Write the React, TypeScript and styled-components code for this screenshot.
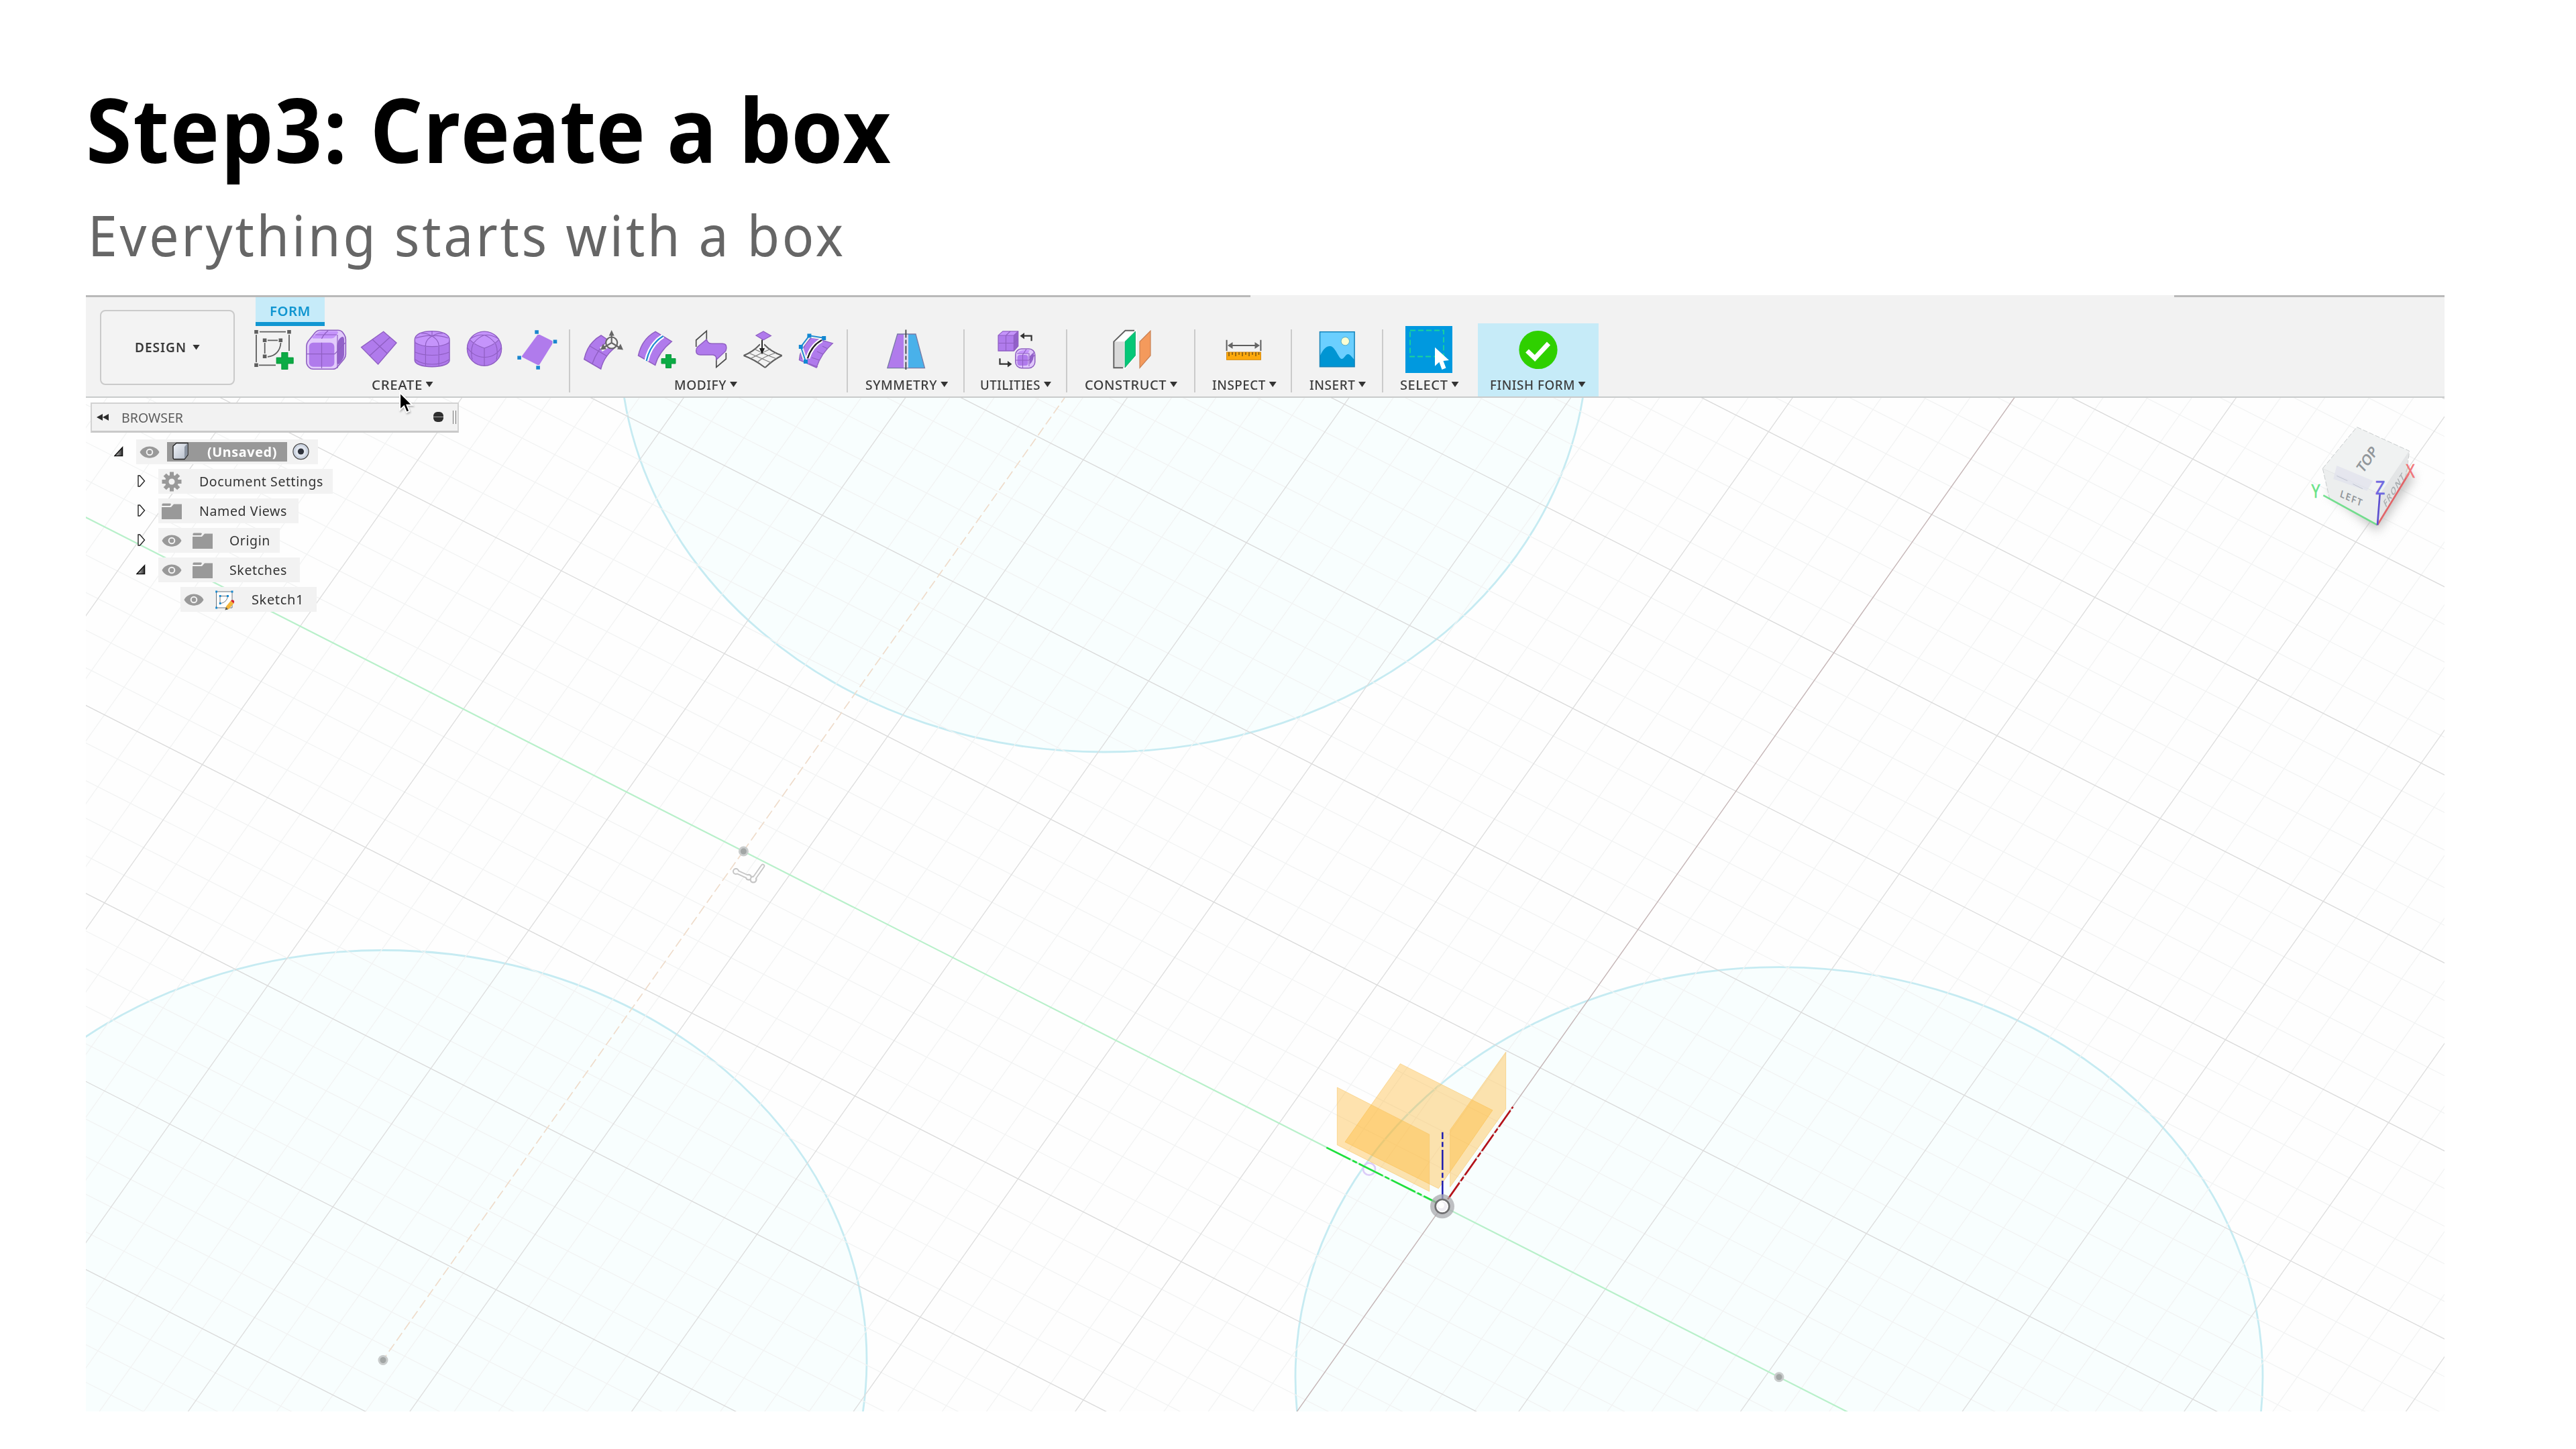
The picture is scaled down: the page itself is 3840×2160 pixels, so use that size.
import React, { useLayoutEffect, useRef, useState } from "react";
import styled, { createGlobalStyle } from "styled-components";

const Global = createGlobalStyle`
  * { box-sizing: border-box; }
  body { margin: 0; background: #fff; }
`;

const UI = `"Noto Sans", "Open Sans", sans-serif`;

const Slide = styled.main`
  width: 3840px;
  height: 2160px;
  padding: 117px 196px 56px 128px;
  background: #fff;
  overflow: hidden;
  display: flex;
  flex-direction: column;
  font-family: ${UI};
`;

const FitBox = styled.span<{ $w: number }>`
  display: block;
  flex: none;
  width: ${(p) => p.$w}px;
  white-space: nowrap;
`;
const FitInner = styled.span`
  display: inline-block;
  transform-origin: 0 50%;
`;

/* Sets a run of text to a given width by stretching it horizontally. */
function Fit({ w, children }: { w: number; children: React.ReactNode }) {
  const ref = useRef<HTMLSpanElement>(null);
  const [scale, setScale] = useState(1);
  useLayoutEffect(() => {
    if (ref.current && ref.current.offsetWidth) setScale(w / ref.current.getBoundingClientRect().width);
  }, [w]);
  return (
    <FitBox $w={w}>
      <FitInner ref={ref} style={{ transform: `scaleX(${scale})` }}>
        {children}
      </FitInner>
    </FitBox>
  );
}

const Title = styled.h1`
  margin: 0;
  height: 150px;
  font: 700 133px/150px "Open Sans", "Noto Sans", sans-serif;
  color: #000;
`;
const Wide = styled.span`
  letter-spacing: 2px;
`;
const Subtitle = styled.p`
  margin: 0;
  padding: 23px 0 0 3px;
  height: 173px;
  font: 400 84px/120px "Noto Sans", "Open Sans", sans-serif;
  letter-spacing: 4px;
  color: #666;
`;

const Frame = styled.section`
  width: 3516px;
  height: 1664px;
  display: flex;
  flex-direction: column;
  background: #fefefe;
`;

const TopEdge = styled.div`
  display: flex;
  justify-content: space-between;
  height: 3px;
  background: #f2f2f2;
`;
const EdgePiece = styled.i<{ $w: number }>`
  width: ${(p) => p.$w}px;
  height: 3px;
  background: #b9b9b9;
`;

const Toolbar = styled.header`
  display: flex;
  height: 150px;
  background: #f2f2f2;
  border-bottom: 2px solid #c9cbcb;
`;

const DesignButton = styled.button`
  margin: 19px 0 0 21px;
  width: 201px;
  height: 112px;
  border: 2px solid #cacaca;
  border-radius: 8px;
  background: #f3f3f3;
  display: flex;
  justify-content: center;
  align-items: center;
  gap: 9px;
  padding: 0 0 1px 0;
  font: 600 20px/26px ${UI};
  letter-spacing: 1px;
  color: #393939;
`;

const Ribbon = styled.div`
  display: flex;
  flex-direction: column;
  flex: 1;
`;
const Tab = styled.div`
  margin-left: 31px;
  width: 103px;
  height: 43px;
  background: #c6ebf9;
  border-bottom: 6px solid #1197d2;
  display: flex;
  justify-content: center;
  padding-top: 6px;
  font: 600 20.4px/28px ${UI};
  letter-spacing: 0.5px;
  color: #1095d0;
`;
const Groups = styled.div`
  display: flex;
  height: 105px;
`;
const Group = styled.div<{ $w: number; $active?: boolean }>`
  width: ${(p) => p.$w}px;
  height: ${(p) => (p.$active ? 109 : 105)}px;
  margin-top: ${(p) => (p.$active ? -4 : 0)}px;
  padding-top: ${(p) => (p.$active ? 4 : 0)}px;
  background: ${(p) => (p.$active ? "#c6ebf8" : "transparent")};
  display: flex;
  flex-direction: column;
  align-items: center;
`;
const Divider = styled.i`
  width: 2px;
  height: 94px;
  margin: 5px -1px 0;
  background: #cbcbcb;
`;
const Icons = styled.div<{ $gap?: number; $nudge?: number }>`
  display: flex;
  align-items: center;
  gap: ${(p) => p.$gap ?? 0}px;
  height: 70px;
  margin-left: ${(p) => (p.$nudge ?? 0) * 2}px;
`;
const Label = styled.div<{ $nudge?: number }>`
  display: flex;
  align-items: center;
  gap: 5px;
  margin-top: 3px;
  margin-left: ${(p) => (p.$nudge ?? 0) * 2}px;
  font: 500 20.4px/28px ${UI};
  letter-spacing: 0.6px;
  color: #3c3c3c;
`;
const Caret = styled.i`
  width: 11px;
  height: 8px;
  background: #333;
  clip-path: polygon(0 0, 100% 0, 50% 100%);
`;
const Svg60 = styled.svg`
  width: 60px;
  height: 60px;
  display: block;
  overflow: visible;
`;
const Svg70 = styled.svg`
  width: 70px;
  height: 70px;
  display: block;
`;

const P = "#b07bec";
const PL = "#c594fb";
const PD = "#8f5fc2";
const G = "#5e5e5e";

const SketchIcon = () => (
  <Svg60 viewBox="0 0 60 60">
    <path d="M9 3.7H48M4 8V49M53 8V32M8 53.3H33" stroke={G} strokeWidth="1.8" fill="none" />
    <path d="M21 16.3H36M16.7 20V36M40.5 20C40 32 32 40 21 40.8" stroke={G} strokeWidth="1.8" fill="none" />
    <path d="M1.2 1H6.8V6.5H1.2ZM50.2 1H55.8V6.5H50.2ZM1.2 50.5H6.8V56H1.2ZM13.8 13.6H19.4V19H13.8ZM37.5 13.6H43.1V19H37.5ZM13.8 37.6H19.4V43H13.8Z" fill={G} />
    <path d="M41.5 34H51.3V41.8H59.5V51.2H51.3V60H41.5V51.2H33.8V41.8H41.5Z" fill="#0cab45" />
    <path d="M42 34.5H50.8V42.3H59V50.7H50.8V59.5H42V50.7H34.3V42.3H42Z" fill="none" stroke="#0a9a3d" />
  </Svg60>
);
const BoxIcon = () => (
  <Svg60 viewBox="0 0 60 60">
    <path d="M14 4.500Q17 1.300 22 1.300H48Q52 1.300 54.500 4L57 7.500Q59.400 11 59.400 15V37Q59.400 41 57 44L47 56Q44.500 59.300 40 59.300H11Q7 59.300 4 56L2.500 54Q.9 52 .9 48V25Q.9 21 3.500 17.500Z" fill="#e2cbfb" stroke={PD} strokeWidth="1.600" />
    <path d="M17 5Q20 2.500 24 2.500H46Q49 3 47.500 6L43 11.500Q41 13.500 38 13.500H11Q8.500 13.500 10 11Z" fill={PL} />
    <rect x="4.700" y="19.700" width="37.700" height="36" rx="6" fill={P} />
    <path d="M46.500 24Q47 17 51 13Q56.500 8 57 15V38Q57 42 54 46L50 51Q46.500 54 46.500 48Z" fill="#9261c9" />
    <path d="M23.500 19.700V58M23.500 14Q26 8 33 2M1 36.700H43L58.500 20M14 8H46M47 8V58" fill="none" stroke={PD} strokeWidth="1.200" />
  </Svg60>
);
const PlaneIcon = () => (
  <Svg60 viewBox="0 0 60 60">
    <path d="M36.600 3.300L56 20L28.600 52L3.600 26.700Z" fill={P} stroke={PD} strokeWidth="1.400" />
    <path d="M20 15L42.300 36M46.300 11.700L16 39.300" stroke={PD} strokeWidth="1.400" />
  </Svg60>
);
const CylinderIcon = () => (
  <Svg60 viewBox="0 0 60 60">
    <path d="M4.300 16C4.300 7 15 2.700 30 2.700S56 7 56 16V46C56 52 45 55.700 30 55.700S4.300 52 4.300 46Z" fill={P} stroke={PD} strokeWidth="1.600" />
    <path d="M5 16C5 8 15 3.500 30 3.500S55.300 8 55.300 16C55.300 22 44 25.500 30 25.500S5 22 5 16Z" fill={PL} />
    <path d="M5 20Q15 25.700 30 25.700T55.500 20M5 34Q15 38.500 30 38.500T55.500 34M5 45Q15 52 30 52T55.500 45M20.400 54V24Q20 16 30 10Q40 16 40.200 24V54M14 6Q22 5 30 10Q38 5 46 6M6 13Q22 8 30 10Q40 8 54 13M30 3V10" fill="none" stroke={PD} strokeWidth="1.200" />
  </Svg60>
);
const SphereIcon = () => (
  <Svg60 viewBox="0 0 60 60">
    <circle cx="29" cy="28.700" r="25.600" fill={P} />
    <path d="M29 3.500C15 3.500 9 12 7 16C13 22 21 26 29 28C37 26 45 22 51 16C49 11 43 3.500 29 3.500Z" fill={PL} />
    <circle cx="29" cy="28.700" r="25.600" fill="none" stroke={PD} strokeWidth="1.400" />
    <path d="M29 28V54M29 28Q14 23 7.500 15.500M29 28Q44 23 50.500 15.500M29 8.500Q19 12 12 22Q8 32 11 45M29 8.500Q39 12 46 22Q50 32 47 45M3.500 27Q13 41 29 41.500T54.500 27M8 14Q19 7 29 8.500Q39 7 50 14" fill="none" stroke={PD} strokeWidth="1.200" />
  </Svg60>
);
const FaceIcon = () => (
  <Svg60 viewBox="0 0 60 60">
    <path d="M31.300 6.700L54.500 18.300L32.300 54L6.300 40.700Z" fill={P} />
    <path d="M25 .5H33V8H25ZM52.500 14.500H60.500V22H52.500ZM-1 38.500H7V46H-1ZM27 53H35V61H27Z" fill="#f2f2f2" />
    <path d="M26.300 1.200H31.900V6.800H26.300ZM53.700 15.500H59.300V21.100H53.700ZM.3 39.500H5.900V45.100H.3ZM28.300 54.200H33.900V59.800H28.300Z" fill="#1a86ce" />
  </Svg60>
);
const EditFormIcon = () => (
  <Svg60 viewBox="0 0 60 60">
    <path d="M26 9Q6 20 .8 44.500L25.700 59Q31 38 50 25Z" fill={P} stroke={PD} strokeWidth="1.500" />
    <path d="M9.500 25L35 40M13 51Q20 30 37 16" fill="none" stroke={PD} strokeWidth="1.400" />
    <path d="M41.700 3V20L26 30M41.700 20L58 30" stroke="#f2f2f2" strokeWidth="7" fill="none" />
    <circle cx="41.700" cy="20" r="8.500" fill="#f2f2f2" stroke="#666" strokeWidth="2.200" />
    <path d="M41.700 8V20L30 27M41.700 20L53 27" stroke="#666" strokeWidth="2.200" fill="none" />
    <path d="M41.700 1L45.700 9.500H37.700ZM25 30.500L29 21.500L34 29.500ZM59 30.500L55 21.500L50 29.500Z" fill="#666" />
  </Svg60>
);
const InsertEdgeIcon = () => (
  <Svg60 viewBox="0 0 60 60">
    <path d="M28 3.300Q8 14 2.500 39L27.700 53.300Q33 34 52.400 18Z" fill={P} stroke={PD} strokeWidth="1.500" />
    <path d="M39.500 10Q20 22 14.600 47" stroke="#fff" strokeWidth="6.500" fill="none" />
    <path d="M39.500 10Q20 22 14.600 47" stroke="#1f8bd0" strokeWidth="2.200" fill="none" />
    <path d="M43.500 37.500H51.500V43.500H58V51H51.500V57.500H43.500V51H37V43.500H43.500Z" fill="#0cab45" stroke="#0a9a3d" />
  </Svg60>
);
const CreaseIcon = () => (
  <Svg60 viewBox="-2 0 60 60">
    <path d="M23.300 15V2.300L7.700 16V26M37.800 43V56.300L52.300 44V35" stroke="#4d4d4d" strokeWidth="1.700" fill="none" />
    <path d="M23.300 15Q25 21.300 31 21.300H47Q52.800 21.300 52.800 27Q52.800 32 50 34L38 45Q38 38 32 38H14Q7.700 38 7.700 32Q7.700 28 10 26Z" fill={P} stroke={PD} strokeWidth="1.500" />
  </Svg60>
);
const PullIcon = () => (
  <Svg60 viewBox="0 0 60 60">
    <path d="M31 3L42.300 9.500L31 15.700L20 9Z" fill={P} stroke={PD} strokeWidth="1.300" />
    <path d="M1.500 39Q15 34 26 22.300M58.700 39Q43 34 32 22.300M1.500 39Q18 45 33.500 57M58.700 39Q46 45 33.500 57" stroke={G} strokeWidth="2" fill="none" />
    <path d="M10 35.500Q30 44 43 50M18 29.500Q34 38 51 44M51 34.500Q30 41 22 49M42 29Q26 36 12 43.500" stroke="#7b7b7b" strokeWidth="1.300" fill="none" />
    <path d="M29 17V34" stroke="#f2f2f2" strokeWidth="6" />
    <path d="M29 15.500V34" stroke="#222" strokeWidth="1.900" />
    <path d="M25 28H33L29 37.500Z" fill="#222" />
  </Svg60>
);
const MatchIcon = () => (
  <Svg60 viewBox="0 0 60 60">
    <path d="M24 12L55.300 20.700Q38 36 31 57L5.400 45.700Q6 28 24 12Z" fill={P} stroke={PD} strokeWidth="1.300" />
    <path d="M24 42L36 46M20 51L33 56M40 25L48 29M32 33L41 37M24 12Q8 26 9 44" stroke={PD} strokeWidth="1.200" fill="none" />
    <path d="M15 47.700L7.800 26L20.400 9.300L42.200 12.700" stroke="#f2f2f2" strokeWidth="6" fill="none" />
    <path d="M39 16Q24 24 18 43" stroke="#fff" strokeWidth="6.500" fill="none" />
    <path d="M39 16Q24 24 18 43" stroke="#222" strokeWidth="2.400" fill="none" />
    <path d="M15 47.700L7.800 26L20.400 9.300L42.200 12.700" stroke="#1f8bd0" strokeWidth="2" fill="none" />
    <path d="M12 45H18V51H12ZM4.800 23H10.800V29H4.800ZM17.400 6.500H23.400V12.500H17.400ZM39.200 10H45.200V16H39.200Z" fill="#1287d2" />
  </Svg60>
);
const SymmetryIcon = () => (
  <Svg60 viewBox="0 0 60 60">
    <path d="M16.800 7H26V57.700H1.800Z" fill={P} />
    <path d="M26 7H33V57.700H26Z" fill="#e0dcf0" />
    <path d="M33 7H44L57.500 57.700H33Z" fill="#49b1ea" />
    <path d="M16.800 7H44L57.500 57.700H1.800Z" fill="none" stroke="#777aa5" strokeWidth="1.300" />
    <path d="M29.400 .5V60" stroke="#444" strokeWidth="1.800" strokeDasharray="12 3 6 3" />
  </Svg60>
);
const ConvertIcon = () => (
  <Svg60 viewBox="-1 0 60 60">
    <path d="M2.100 9L9 3H31.700V25L25.400 32H2.100Z" fill={P} stroke={PD} strokeWidth="1.300" />
    <path d="M2.500 9L9 3.500H31L25.400 9Z" fill={PL} />
    <path d="M25.400 9L31.300 4V25L25.400 31.500Z" fill="#9261c9" />
    <path d="M2.100 9H25.400V32M25.400 9L31.700 3M13.500 32V9L20 3M2 20.500H25.400L31.500 14" fill="none" stroke={PD} strokeWidth="1.200" />
    <rect x="27.800" y="29" width="29" height="28.700" rx="9" fill="#dfc6fb" stroke={PD} strokeWidth="1.500" />
    <rect x="30.500" y="38" width="16" height="16" rx="4" fill={P} />
    <path d="M33 33Q38 30 49 31L46 36H31Z" fill={PL} />
    <path d="M49 40L55 34Q56 46 49 52Z" fill="#9261c9" />
    <path d="M38.500 57V38L44 29.500M28 46H48L57 38M30 36H48V55" fill="none" stroke={PD} strokeWidth="1.100" />
    <path d="M51.600 17.300V9.700H38M4.500 43.300V51.700H18" stroke="#333" strokeWidth="2.200" fill="none" />
    <path d="M34.500 9.700L41 5V14.400ZM22.500 51.700L16 47V56.400Z" fill="#333" />
  </Svg60>
);
const ConstructIcon = () => (
  <Svg60 viewBox="-1 0 60 60">
    <path d="M2.300 18.300L19.400 1.700H34L19 18.300Z" fill="#fff" />
    <path d="M2.300 18.300H18V57.300H2.300Z" fill="#d9d9d9" />
    <path d="M33 1.700H19.400L2.300 18.300V57.300H16" fill="none" stroke={G} strokeWidth="1.900" />
    <path d="M35 2.300V39L19 57.300V18.300Z" fill="#04c777" stroke="#fff" strokeWidth="2.500" />
    <path d="M34.500 3V39L19 57V18.300Z" fill="#04c777" stroke="#149e66" strokeWidth=".8" />
    <path d="M57 2.300V39L41 57.300V18.300Z" fill="#f49a5c" stroke="#c98053" strokeWidth="1.200" />
  </Svg60>
);
const InspectIcon = () => (
  <Svg60 viewBox="0 0 60 60">
    <path d="M4.600 15.700V32M55.400 15.700V32M8 24H52" stroke={G} strokeWidth="2" />
    <path d="M6 24L13.500 19V29ZM54 24L46.500 19V29Z" fill="#666" />
    <rect x="4.500" y="34" width="51" height="11.300" fill="#fda90c" stroke="#d38a17" />
    <path d="M8 34V40M13 34V38M18 34V40M23 34V38M28 34V40M33 34V38M38 34V40M43 34V38M48 34V40M52.500 34V38" stroke="#7a5413" strokeWidth="1.500" />
  </Svg60>
);
const PictureIcon = () => (
  <Svg60 viewBox="0 0 60 60">
    <rect x="4.500" y="3.700" width="51.600" height="52" fill="#6bcfff" />
    <path d="M5 39C10 28 15 24.500 20 25C28 26 32 43 37 44C41 44 43 36 47 37C51 38 53 43 56 45V56H5Z" fill="#0095d3" />
    <circle cx="42.300" cy="17.700" r="6.200" fill="#fbffd2" stroke="#58acc4" />
    <rect x="4.500" y="3.700" width="51.600" height="52" fill="none" stroke="#1583b9" strokeWidth="1.500" />
  </Svg60>
);
const SelectIcon = () => (
  <Svg70 viewBox="0 0 70 70">
    <rect width="70" height="70" fill="#0099df" />
    <rect x="7" y="6.500" width="50" height="39" fill="none" stroke="#19d49b" strokeWidth="1.800" strokeDasharray="8 4" />
    <path d="M44 31.700V59.700L50.400 53.700L54.500 65L60.500 62.500L56.500 52L65 51Z" fill="#fff" />
  </Svg70>
);
const CheckIcon = () => (
  <Svg60 viewBox="0 0 60 60">
    <circle cx="30" cy="30.500" r="28.600" fill="#2fd000" />
    <path d="M13.500 32L25 43L45.500 21" fill="none" stroke="#fff" strokeWidth="7" />
  </Svg60>
);

const ViewportWrap = styled.div`
  position: relative;
`;
const Viewport = styled.div`
  position: relative;
  width: 3516px;
  height: 1511px;
  overflow: hidden;
`;
const Canvas = styled.svg`
  position: absolute;
  inset: 0;
  width: 3516px;
  height: 1511px;
`;
const Palette = styled.aside`
  position: relative;
  width: 549px;
  margin: 7px 0 0 7px;
`;
const PaletteHead = styled.div`
  display: flex;
  align-items: center;
  height: 45px;
  padding: 0 2px 1px 7px;
  background: #f2f2f2;
  border: 2px solid #d2d2d2;
  border-bottom: 3px solid #c9c9c9;
  font: 400 20.500px/30px ${UI};
  color: #5d5d5d;
`;
const Spacer = styled.i`
  flex: 1;
`;
const Minus = styled.i`
  width: 15px;
  height: 15px;
  border-radius: 6px;
  background: linear-gradient(#2f2f2f 6.500px, #aaa 6.500px, #aaa 8.500px, #2f2f2f 8.500px);
  margin-right: 14px;
`;
const Grip = styled.i`
  width: 5px;
  height: 20px;
  border-left: 1px solid #777;
  border-right: 1px solid #777;
`;
const Tree = styled.ul`
  list-style: none;
  margin: 10px 0 0;
  padding: 0;
  display: flex;
  flex-direction: column;
  gap: 7.500px;
`;
const Row = styled.li<{ $indent: number }>`
  display: flex;
  align-items: center;
  height: 36.500px;
  padding-left: ${(p) => p.$indent}px;
`;
const Twist = styled.svg<{ $gap: number }>`
  width: 14px;
  height: 18px;
  flex: none;
  margin-right: ${(p) => p.$gap}px;
`;
const Chip = styled.div<{ $w: number }>`
  display: flex;
  align-items: center;
  width: ${(p) => p.$w}px;
  height: 36.500px;
  padding: 1px 0 0 5px;
  background: #f2f2f2;
  font: 400 20px/28px ${UI};
  letter-spacing: 0.6px;
  color: #333;
`;
const Selected = styled.div`
  display: flex;
  align-items: center;
  width: 179px;
  height: 29px;
  margin: 0 8px 0 11px;
  padding-left: 8px;
  gap: 28px;
  background: #989898;
  color: #fff;
  font-weight: 700;
`;
const Glyph = styled.svg<{ $w?: number; $mr?: number }>`
  width: ${(p) => p.$w ?? 30}px;
  height: 30px;
  flex: none;
  margin-right: ${(p) => p.$mr ?? 0}px;
  overflow: visible;
`;

const Eye = ({ mr = 0 }: { mr?: number }) => (
  <Glyph $mr={mr} viewBox="0 0 30 30">
    <path d="M0.500 15C6 3.500 24 3.500 29.500 15C24 26.500 6 26.500 .5 15Z" fill="#999" />
    <circle cx="15" cy="15" r="4.300" fill="none" stroke="#f2f2f2" strokeWidth="2" />
  </Glyph>
);
const Folder = ({ mr = 0 }: { mr?: number }) => (
  <Glyph $mr={mr} viewBox="0 0 30 30">
    <path d="M.5 5Q.5 3.500 2 3.500H12.500Q14.500 3.500 13.500 5.500L12.500 7H.5ZM0 9H14L18 4.500H30V27H0Z" fill="#999" />
  </Glyph>
);
const Gear = () => (
  <Glyph $mr={26} viewBox="0 0 30 30">
    <g fill="#999">
      {[0, 45, 90, 135].map((a) => (
        <rect key={a} x="12" y="0.500" width="6" height="29" transform={`rotate(${a} 15 15)`} />
      ))}
      <circle cx="15" cy="15" r="10" />
    </g>
    <circle cx="15" cy="15" r="4.500" fill="#f2f2f2" />
  </Glyph>
);
const Solid = () => (
  <Glyph $w={24} viewBox="0 0 24 30">
    <defs>
      <linearGradient id="solid" x1="0" y1="0" x2="1" y2="1">
        <stop offset="0" stopColor="#f2f5fa" />
        <stop offset="1" stopColor="#b4bcc9" />
      </linearGradient>
    </defs>
    <path d="M1 6L6 1.500H23V19L18 25.500H3Q1 25.500 1 23Z" fill="url(#solid)" stroke="#222" strokeWidth="1.400" />
    <path d="M18 25L22.500 19V2L18 7Z" fill="#8b94a1" />
  </Glyph>
);
const Radio = () => (
  <Glyph $w={25} viewBox="0 0 25 30">
    <circle cx="12.500" cy="14" r="11.600" fill="#cdd5e2" stroke="#444" strokeWidth="1.200" />
    <circle cx="12.500" cy="14" r="8" fill="#eef1f6" opacity=".6" />
    <circle cx="12.500" cy="14" r="4.600" fill="#2e323b" />
  </Glyph>
);
const SketchGlyph = () => (
  <Glyph $mr={25} viewBox="0 0 30 30">
    <path d="M2.500 3H26V27H2.500Z" fill="#fff" stroke="#6a747c" strokeWidth="1" />
    <path d="M8 9.500H19.500C19 15 15 20 8 20.500Z" fill="none" stroke="#6a747c" strokeWidth="1" />
    <path d="M1.200 1.500H4V4.500H1.200ZM24.500 1.500H27.500V4.500H24.500ZM1.200 25.500H4V28.500H1.200ZM6.800 8H9.500V11H6.800ZM18 8H21V11H18ZM6.800 19H9.500V22H6.800Z" fill="#1789cf" />
    <path d="M24 16.500L28.500 20.500L21 29L15.500 30L17 25Z" fill="#f3b53b" />
    <path d="M24 16.500Q26 14.500 28.500 16Q30 18 28.500 20.500Z" fill="#d3222e" />
    <path d="M17 26L15.500 30.500L20 29.300Z" fill="#545454" />
  </Glyph>
);

const Closed = ({ gap }: { gap: number }) => (
  <Twist $gap={gap} viewBox="0 0 14 18">
    <path d="M2 1H4.500L11.500 9L4.500 17H2Z" fill="#fff" stroke="#222" strokeWidth="1.400" />
  </Twist>
);
const Open = ({ gap }: { gap: number }) => (
  <Twist $gap={gap} viewBox="0 0 14 18">
    <defs>
      <linearGradient id="tw">
        <stop offset="0" stopColor="#d0d0d0" />
        <stop offset="1" stopColor="#333" />
      </linearGradient>
    </defs>
    <path d="M1 15.500L12.500 3V15.500Z" fill="url(#tw)" stroke="#111" strokeWidth="1.600" />
  </Twist>
);

const OX = 2150;
const OY = 1798;
const SA = 0.5078;
const SB = 1.4132;
const range = (a: number, b: number) => Array.from({ length: b - a + 1 }, (_, i) => a + i);

/* Ground grid of the modelling space: one heavy line for every five cells. */
function Grid() {
  const down = (k: number) => {
    const y = OY + k * 56.06;
    return <path key={`a${k}`} d={`M100 ${y + (100 - OX) * SA}L3700 ${y + (3700 - OX) * SA}`} />;
  };
  const up = (k: number) => {
    const x = OX + k * 66.12;
    return <path key={`b${k}`} d={`M${x - (2150 - OY) / SB} 2150L${x + (OY - 550) / SB} 550`} />;
  };
  const a = range(-40, 26).filter((k) => k !== 0);
  const b = range(-44, 44).filter((k) => k !== 0);
  return (
    <g fill="none">
      <g stroke="#f2f3f3" strokeWidth="1.300">
        {a.filter((k) => k % 5).map(down)}
        {b.filter((k) => k % 5).map(up)}
      </g>
      <g stroke="#d9d9d9" strokeWidth="1.300">{a.filter((k) => k % 5 === 0).map(down)}</g>
      <g stroke="#dddddd" strokeWidth="1.300">{b.filter((k) => k % 5 === 0).map(up)}</g>
      <g stroke="#c4b4b5" strokeWidth="1.400">{up(0)}</g>
      <g stroke="#b8f0ca" strokeWidth="2.200">{down(0)}</g>
    </g>
  );
}

const Disc = ({ x, y }: { x: number; y: number }) => (
  <ellipse cx={x} cy={y} rx="721" ry="611" fill="#f8fefe" stroke="#c6ebf2" strokeWidth="2.800" />
);
const Dot = ({ x, y }: { x: number; y: number }) => (
  <g>
    <circle cx={x} cy={y} r="7.500" fill="#c9cccc" />
    <circle cx={x} cy={y} r="4.500" fill="#a2a6a5" />
  </g>
);

const CubeText = styled.text`
  font-family: "Noto Sans", sans-serif;
  font-weight: 600;
  fill: #92979b;
  text-anchor: middle;
`;
const AxisText = styled.text`
  font-family: "Noto Sans", sans-serif;
  font-size: 27px;
  text-anchor: middle;
`;

const ViewCube = () => (
  <g transform="translate(3400 600) scale(.33333)">
    <defs>
      <filter id="soft" x="-40%" y="-40%" width="180%" height="180%">
        <feGaussianBlur stdDeviation="24" />
      </filter>
    </defs>
    <path d="M210 400L432 575L600 330L450 260Z" fill="#999" opacity=".6" filter="url(#soft)" />
    <path d="M187 295L445 410L432 548L218 430Z" fill="#eceeee" />
    <path d="M445 410L575 217L553 340L432 548Z" fill="#e3e5e6" />
    <path d="M187 295L340 110L575 217L445 410Z" fill="#f0f2f2" />
    <path d="M187 295L340 110L575 217L560 330M187 295L218 430" fill="none" stroke="#c8cccd" strokeWidth="3" strokeDasharray="22 8" />
    <path d="M187 295L445 410L575 217" fill="none" stroke="#e2e4e6" strokeWidth="3" />
    <path d="M250 282L412 350L385 395L235 342Z" fill="#dfe1ec" opacity=".7" />
    <path d="M250 328L298 350M322 364L366 386" stroke="#c0c3cf" strokeWidth="3" />
    <CubeText transform="translate(402 270) rotate(-55) skewX(-10)" fontSize="62">TOP</CubeText>
    <CubeText transform="translate(312 444) rotate(25) skewX(10)" fontSize="43" letterSpacing="4">LEFT</CubeText>
    <CubeText transform="translate(513 402) rotate(-58) skewX(-32) scale(1 .8)" fontSize="42" letterSpacing="5" opacity=".7">FRONT</CubeText>
    <path d="M190 415L432 548" stroke="#5fdc7e" strokeWidth="8" opacity=".85" />
    <path d="M432 548L572 318" stroke="#e26468" strokeWidth="8" />
    <path d="M432 548L443 408" stroke="#5d4fd0" strokeWidth="8" />
    <g transform="scale(3)" strokeWidth=".5">
      <AxisText fill="#69e387" stroke="#69e387" transform="translate(52 142) scale(.85 1)">Y</AxisText>
      <AxisText fill="#f07478" stroke="#f07478" transform="translate(193 112) scale(.85 1)">X</AxisText>
      <AxisText fill="#6f68e0" stroke="#6f68e0" transform="translate(148 137.500) scale(.95 1)">Z</AxisText>
    </g>
  </g>
);

/* Perpendicular mark: two rounded bars drawn as outlines. */
const RightAngle = () => (
  <g fill="none" strokeLinecap="round">
    <path d="M1097 1299L1116 1307.700M1123 1311L1137 1291" stroke="#c6c6c6" strokeWidth="6.500" />
    <g fill="#c6c6c6">
      <circle cx="1097" cy="1299" r="5" />
      <circle cx="1116" cy="1307.700" r="5" />
      <circle cx="1123" cy="1311" r="5.600" />
    </g>
    <path d="M1097 1299L1116 1307.700M1123 1311L1137 1291" stroke="#fdfdfd" strokeWidth="3" />
    <g fill="#fdfdfd">
      <circle cx="1097" cy="1299" r="3" />
      <circle cx="1116" cy="1307.700" r="2.600" />
      <circle cx="1123" cy="1311" r="3.200" />
    </g>
  </g>
);

const OriginPlanes = () => (
  <g transform="translate(1900 1520) scale(.33333)">
    <circle cx="423" cy="668" r="27" fill="none" stroke="#dccdf8" strokeWidth="8" />
    <g fill="#ffb62c" fillOpacity=".38" stroke="#f8c260" strokeOpacity=".55" strokeWidth="3">
      <path d="M562 197L975 405L733 755L315 547Z" />
      <path d="M280 303L692 513V768L280 560Z" />
      <path d="M1034 145V400L785 748V493Z" />
    </g>
    <path d="M232 572L735 823" stroke="#1fe03c" strokeWidth="8" strokeDasharray="120 10 22 10" />
    <path d="M775 803L1066 390" stroke="#b51219" strokeWidth="8" strokeDasharray="90 10 22 10" />
    <path d="M751 810V503" stroke="#1d1bb0" strokeWidth="7.500" strokeDasharray="90 13 22 13" />
    <circle cx="750" cy="835" r="54" fill="#a9a9ad" fillOpacity=".75" />
    <circle cx="750" cy="835" r="31" fill="#fff" stroke="#707072" strokeWidth="8" />
    <circle cx="750" cy="835" r="22" fill="#f0eef4" />
    <circle cx="745" cy="830" r="14" fill="#fff" />
  </g>
);

const Pointer = styled.svg`
  position: absolute;
  left: 466px;
  top: -10px;
  width: 24px;
  height: 35px;
  overflow: visible;
  filter: drop-shadow(1px 2px 1px rgba(0, 0, 0, 0.25));
`;

export default function App() {
  return (
    <Slide>
      <Global />
      <Title>
        <Fit w={1200}>
          <Wide>Step3:</Wide> Create a box
        </Fit>
      </Title>
      <Subtitle>
        <Fit w={1130}>Everything starts with a box</Fit>
      </Subtitle>
      <Frame>
        <TopEdge>
          <EdgePiece $w={1736} />
          <EdgePiece $w={403} />
        </TopEdge>
        <Toolbar>
          <DesignButton>
            <Fit w={77}>DESIGN</Fit>
            <Caret />
          </DesignButton>
          <Ribbon>
            <Tab>
              <Fit w={61}>FORM</Fit>
            </Tab>
            <Groups>
              <Group $w={499}>
                <Icons $gap={18.8} $nudge={5}>
                  <SketchIcon />
                  <BoxIcon />
                  <PlaneIcon />
                  <CylinderIcon />
                  <SphereIcon />
                  <FaceIcon />
                </Icons>
                <Label>
                  <Fit w={76}>CREATE</Fit>
                  <Caret />
                </Label>
              </Group>
              <Divider />
              <Group $w={414}>
                <Icons $gap={19} $nudge={2}>
                  <EditFormIcon />
                  <InsertEdgeIcon />
                  <CreaseIcon />
                  <PullIcon />
                  <MatchIcon />
                </Icons>
                <Label $nudge={-4}>
                  <Fit w={78}>MODIFY</Fit>
                  <Caret />
                </Label>
              </Group>
              <Divider />
              <Group $w={173.5}>
                <Icons $nudge={1}>
                  <SymmetryIcon />
                </Icons>
                <Label $nudge={2}>
                  <Fit w={107}>SYMMETRY</Fit>
                  <Caret />
                </Label>
              </Group>
              <Divider />
              <Group $w={153}>
                <Icons $nudge={2}>
                  <ConvertIcon />
                </Icons>
                <Label $nudge={1}>
                  <Fit w={90}>UTILITIES</Fit>
                  <Caret />
                </Label>
              </Group>
              <Divider />
              <Group $w={191}>
                <Icons $nudge={2}>
                  <ConstructIcon />
                </Icons>
                <Label $nudge={1}>
                  <Fit w={122}>CONSTRUCT</Fit>
                  <Caret />
                </Label>
              </Group>
              <Divider />
              <Group $w={144.5}>
                <Icons $nudge={1}>
                  <InspectIcon />
                </Icons>
                <Label $nudge={2}>
                  <Fit w={80}>INSPECT</Fit>
                  <Caret />
                </Label>
              </Group>
              <Divider />
              <Group $w={135.5}>
                <Icons>
                  <PictureIcon />
                </Icons>
                <Label $nudge={1}>
                  <Fit w={68.5}>INSERT</Fit>
                  <Caret />
                </Label>
              </Group>
              <Divider />
              <Group $w={142.5}>
                <Icons $nudge={-2}>
                  <SelectIcon />
                </Icons>
                <Label $nudge={-1}>
                  <Fit w={71.5}>SELECT</Fit>
                  <Caret />
                </Label>
              </Group>
              <Group $w={180} $active>
                <Icons>
                  <CheckIcon />
                </Icons>
                <Label $nudge={-1}>
                  <Fit w={127}>FINISH FORM</Fit>
                  <Caret />
                </Label>
              </Group>
            </Groups>
          </Ribbon>
        </Toolbar>
        <ViewportWrap>
          <Viewport>
            <Canvas viewBox="128 593 3516 1511">
              <Disc x={1645} y={510} />
              <Disc x={571} y={2027.5} />
              <Disc x={2652} y={2052.7} />
              <Grid />
              <path d="M1108 1269L571 2027" stroke="#efdccb" strokeWidth="1.700" strokeDasharray="14 6" />
              <path d="M1108 1269L1587 593" stroke="#efdccb" strokeWidth="1.700" strokeDasharray="14 6" />
              <Dot x={1108.4} y={1269} />
              <Dot x={571} y={2027.5} />
              <Dot x={2652} y={2052.7} />
              <RightAngle />
              <OriginPlanes />
              <ViewCube />
            </Canvas>
            <Palette>
              <PaletteHead>
                <Glyph $w={18} $mr={19} viewBox="0 0 18 30">
                  <path d="M9 10V20L0 15ZM18 10V20L9 15Z" fill="#2b2b2b" />
                </Glyph>
                <Fit w={92}>BROWSER</Fit>
                <Spacer />
                <Minus />
                <Grip />
              </PaletteHead>
              <Tree>
                <Row $indent={35}>
                  <Open gap={19} />
                  <Chip $w={271}>
                    <Eye />
                    <Selected>
                      <Solid />
                      <Fit w={104}>(Unsaved)</Fit>
                    </Selected>
                    <Radio />
                  </Chip>
                </Row>
                <Row $indent={69}>
                  <Closed gap={18} />
                  <Chip $w={260}>
                    <Gear />
                    <Fit w={185}>Document Settings</Fit>
                  </Chip>
                </Row>
                <Row $indent={69}>
                  <Closed gap={18} />
                  <Chip $w={208.5}>
                    <Folder mr={26} />
                    <Fit w={131}>Named Views</Fit>
                  </Chip>
                </Row>
                <Row $indent={69}>
                  <Closed gap={18} />
                  <Chip $w={181}>
                    <Eye mr={15.5} />
                    <Folder mr={25} />
                    <Fit w={61}>Origin</Fit>
                  </Chip>
                </Row>
                <Row $indent={68}>
                  <Open gap={19} />
                  <Chip $w={211}>
                    <Eye mr={15.5} />
                    <Folder mr={25} />
                    <Fit w={86}>Sketches</Fit>
                  </Chip>
                </Row>
                <Row $indent={134}>
                  <Chip $w={203}>
                    <Eye mr={15.5} />
                    <SketchGlyph />
                    <Fit w={78}>Sketch1</Fit>
                  </Chip>
                </Row>
              </Tree>
            </Palette>
          </Viewport>
          <Pointer viewBox="0 0 22 32">
            <path d="M2 2V25.500L7.500 20.500L11 29L15 27.300L11.500 19H19Z" fill="#000" stroke="#fff" strokeWidth="1.800" />
          </Pointer>
        </ViewportWrap>
      </Frame>
    </Slide>
  );
}
